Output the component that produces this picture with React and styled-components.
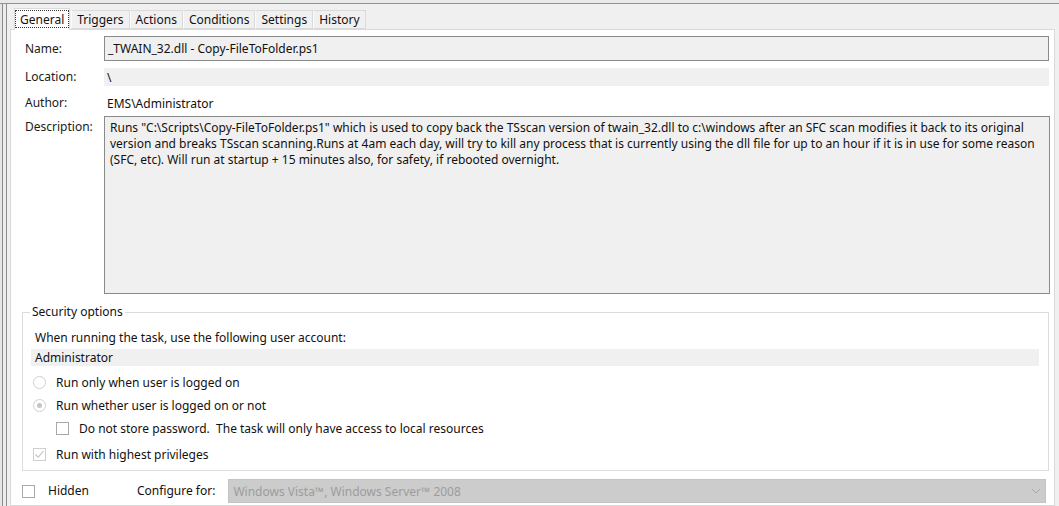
import React from 'react';
import styled, { createGlobalStyle } from 'styled-components';

const GlobalStyle = createGlobalStyle`
	html, body {
		margin: 0;
		padding: 0;
		background: #f0f0f0;
	}
	body {
		font-family: 'Noto Sans', 'Open Sans', sans-serif;
		font-size: 12px;
		color: #111;
	}
`;

// Frame
const Window = styled.div`
	width: 1059px;
	height: 506px;
	overflow: hidden;
	display: flex;
	flex-direction: column;
	background: #f0f0f0;
`;

const TopEdge = styled.div`
	flex: none;
	height: 3px;
	background: #e9e9e9;
	border-bottom: 1px solid #949494;
`;

const Body = styled.div`
	flex: 1;
	min-height: 0;
	display: flex;
`;

const LeftRail = styled.div`
	flex: none;
	width: 10px;
	background: linear-gradient(
		to right,
		#e6e6e6 0 2px,
		#8c8c8c 2px 3px,
		#ececec 3px 6px,
		#8c8c8c 6px 7px,
		#f0f0f0 7px
	);
`;

const Main = styled.div`
	flex: 1;
	min-width: 0;
	display: flex;
	flex-direction: column;
	padding-right: 4px;
`;

// Tabs
const TabStrip = styled.div`
	flex: none;
	height: 25px;
	display: flex;
	align-items: flex-end;
	padding-left: 4px;
`;

const Tab = styled.div`
	position: relative;
	box-sizing: border-box;
	height: ${(props) => (props.active ? '22px' : '19px')};
	margin-bottom: ${(props) => (props.active ? '-1px' : '0')};
	margin-right: ${(props) => (props.active ? '1px' : '0')};
	padding: ${(props) => (props.active ? '1px 0 2px' : '0 5px')};
	display: flex;
	align-items: ${(props) => (props.active ? 'stretch' : 'center')};
	border: 1px solid #dadada;
	border-left-color: ${(props) => (props.active ? '#dadada' : '#fbfbfb')};
	border-bottom: ${(props) => (props.active ? 'none' : '1px solid #dadada')};
	background: ${(props) => (props.active ? '#fff' : '#f0f0f0')};
	z-index: ${(props) => (props.active ? 2 : 1)};

	span {
		display: flex;
		align-items: center;
		padding: 0 ${(props) => (props.active ? '4px' : '0')};
		border: ${(props) => (props.active ? '1px dotted #3a3a3a' : 'none')};
		line-height: 15px;
	}
`;

const Panel = styled.div`
	flex: 1;
	min-height: 0;
	min-width: 0;
	position: relative;
	z-index: 1;
	background: #fff;
	border: 1px solid #d9d9d9;
	padding: 6px 5px 0 14px;
	display: flex;
	flex-direction: column;
`;

// General form
const FormRow = styled.div`
	display: grid;
	grid-template-columns: 79px minmax(0, 1fr);
	align-items: ${(props) => (props.top ? 'start' : 'center')};
	margin-top: ${(props) => props.gap || 0}px;
`;

const Label = styled.div`
	padding-top: ${(props) => (props.top ? '3px' : '0')};
	line-height: 16px;
	color: #1a1a1a;
`;

const Field = styled.div`
	box-sizing: border-box;
	height: ${(props) => props.h}px;
	display: flex;
	align-items: center;
	padding: 0 3px;
	background: ${(props) => (props.plain ? 'transparent' : '#f0f0f0')};
	border: ${(props) => (props.boxed ? '1px solid #8a8a8a' : 'none')};
	white-space: nowrap;
`;

const DescriptionBox = styled.div`
	box-sizing: border-box;
	height: 178px;
	margin-right: -1px;
	padding: 3px 5px;
	overflow: hidden;
	background: #f0f0f0;
	border: 1px solid #8a8a8a;
	line-height: 16px;

	p {
		margin: 0;
		white-space: nowrap;
	}
`;

// Security options
const Group = styled.fieldset`
	margin: 10px 0 0 -3px;
	padding: 4px 9px 0 12px;
	height: 167px;
	box-sizing: border-box;
	border: 1px solid #dcdcdc;
	min-width: 0;

	legend {
		padding: 0 2px;
		margin-left: -5px;
		line-height: 16px;
	}
`;

const GroupText = styled.div`
	line-height: 16px;
	margin-top: ${(props) => props.gap || 0}px;
`;

const AccountBar = styled.div`
	margin: 3px 0 0 -4px;
	height: 17px;
	display: flex;
	align-items: center;
	padding-left: 4px;
	background: #f0f0f0;
`;

const OptionRow = styled.div`
	display: flex;
	align-items: center;
	height: 16px;
	margin-top: ${(props) => props.gap}px;
	margin-left: ${(props) => (props.indent ? 21 : -2)}px;
	gap: 10px;
`;

const Radio = styled.span`
	flex: none;
	box-sizing: border-box;
	width: 13px;
	height: 13px;
	border-radius: 50%;
	border: 1px solid #cfcfcf;
	background: #fff;
	display: flex;
	align-items: center;
	justify-content: center;

	&::after {
		content: '';
		display: ${(props) => (props.checked ? 'block' : 'none')};
		width: 5px;
		height: 5px;
		border-radius: 50%;
		background: #c4c4c4;
	}
`;

const Check = styled.span`
	flex: none;
	box-sizing: border-box;
	width: 13px;
	height: 13px;
	border: 1px solid ${(props) => (props.disabled ? '#cfcfcf' : '#a9a9a9')};
	background: #fff;
	display: flex;
	align-items: center;
	justify-content: center;
`;

// Bottom row
const BottomRow = styled.div`
	display: flex;
	align-items: center;
	height: 24px;
	margin: 8px 0 0 -3px;
`;

const BottomLabel = styled.span`
	margin-left: ${(props) => props.gap}px;
	line-height: 16px;
`;

const Select = styled.div`
	flex: 1;
	box-sizing: border-box;
	height: 24px;
	margin: 0 3px 0 13px;
	padding: 0 4px;
	display: flex;
	align-items: center;
	justify-content: space-between;
	background: #cccccc;
	border: 1px solid #c4c4c4;
	color: #9c9c9c;
`;

const CheckMark = () => (
	<svg width="11" height="11" viewBox="0 0 11 11">
		<polyline points="1.5,5.5 4.2,8.3 9.5,2" fill="none" stroke="#c0c0c0" strokeWidth="1.1" />
	</svg>
);

const Chevron = () => (
	<svg width="10" height="6" viewBox="0 0 10 6">
		<polyline points="1,1 5,5 9,1" fill="none" stroke="#a8a8a8" strokeWidth="1" />
	</svg>
);

const TABS = ['General', 'Triggers', 'Actions', 'Conditions', 'Settings', 'History'];

const DESCRIPTION = [
	'Runs "C:\\Scripts\\Copy-FileToFolder.ps1" which is used to copy back the TSscan version of twain_32.dll to c:\\windows after an SFC scan modifies it back to its original',
	'version and breaks TSscan scanning.Runs at 4am each day, will try to kill any process that is currently using the dll file for up to an hour if it is in use for some reason',
	'(SFC, etc). Will run at startup + 15 minutes also, for safety, if rebooted overnight.',
];

const App = () => (
	<Window>
		<GlobalStyle />
		<TopEdge />
		<Body>
			<LeftRail />
			<Main>
				<TabStrip>
					{TABS.map((tab, i) => (
						<Tab key={tab} active={i === 0}>
							<span>{tab}</span>
						</Tab>
					))}
				</TabStrip>
				<Panel>
					<FormRow>
						<Label>Name:</Label>
						<Field h={25} boxed>_TWAIN_32.dll - Copy-FileToFolder.ps1</Field>
					</FormRow>
					<FormRow gap={7}>
						<Label>Location:</Label>
						<Field h={18}>\</Field>
					</FormRow>
					<FormRow gap={8}>
						<Label>Author:</Label>
						<Field h={18} plain>EMS\Administrator</Field>
					</FormRow>
					<FormRow gap={4} top>
						<Label top>Description:</Label>
						<DescriptionBox>
							{DESCRIPTION.map((line) => (
								<p key={line}>{line}</p>
							))}
						</DescriptionBox>
					</FormRow>

					<Group>
						<legend>Security options</legend>
						<GroupText gap={6}>When running the task, use the following user account:</GroupText>
						<AccountBar>Administrator</AccountBar>
						<OptionRow gap={8}>
							<Radio />
							<span>Run only when user is logged on</span>
						</OptionRow>
						<OptionRow gap={7}>
							<Radio checked />
							<span>Run whether user is logged on or not</span>
						</OptionRow>
						<OptionRow gap={7} indent>
							<Check />
							<span>Do not store password.&nbsp; The task will only have access to local resources</span>
						</OptionRow>
						<OptionRow gap={10}>
							<Check disabled>
								<CheckMark />
							</Check>
							<span>Run with highest privileges</span>
						</OptionRow>
					</Group>

					<BottomRow>
						<Check />
						<BottomLabel gap={13}>Hidden</BottomLabel>
						<BottomLabel gap={48}>Configure for:</BottomLabel>
						<Select>
							<span>Windows Vista™, Windows Server™ 2008</span>
							<Chevron />
						</Select>
					</BottomRow>
				</Panel>
			</Main>
		</Body>
	</Window>
);

export default App;
